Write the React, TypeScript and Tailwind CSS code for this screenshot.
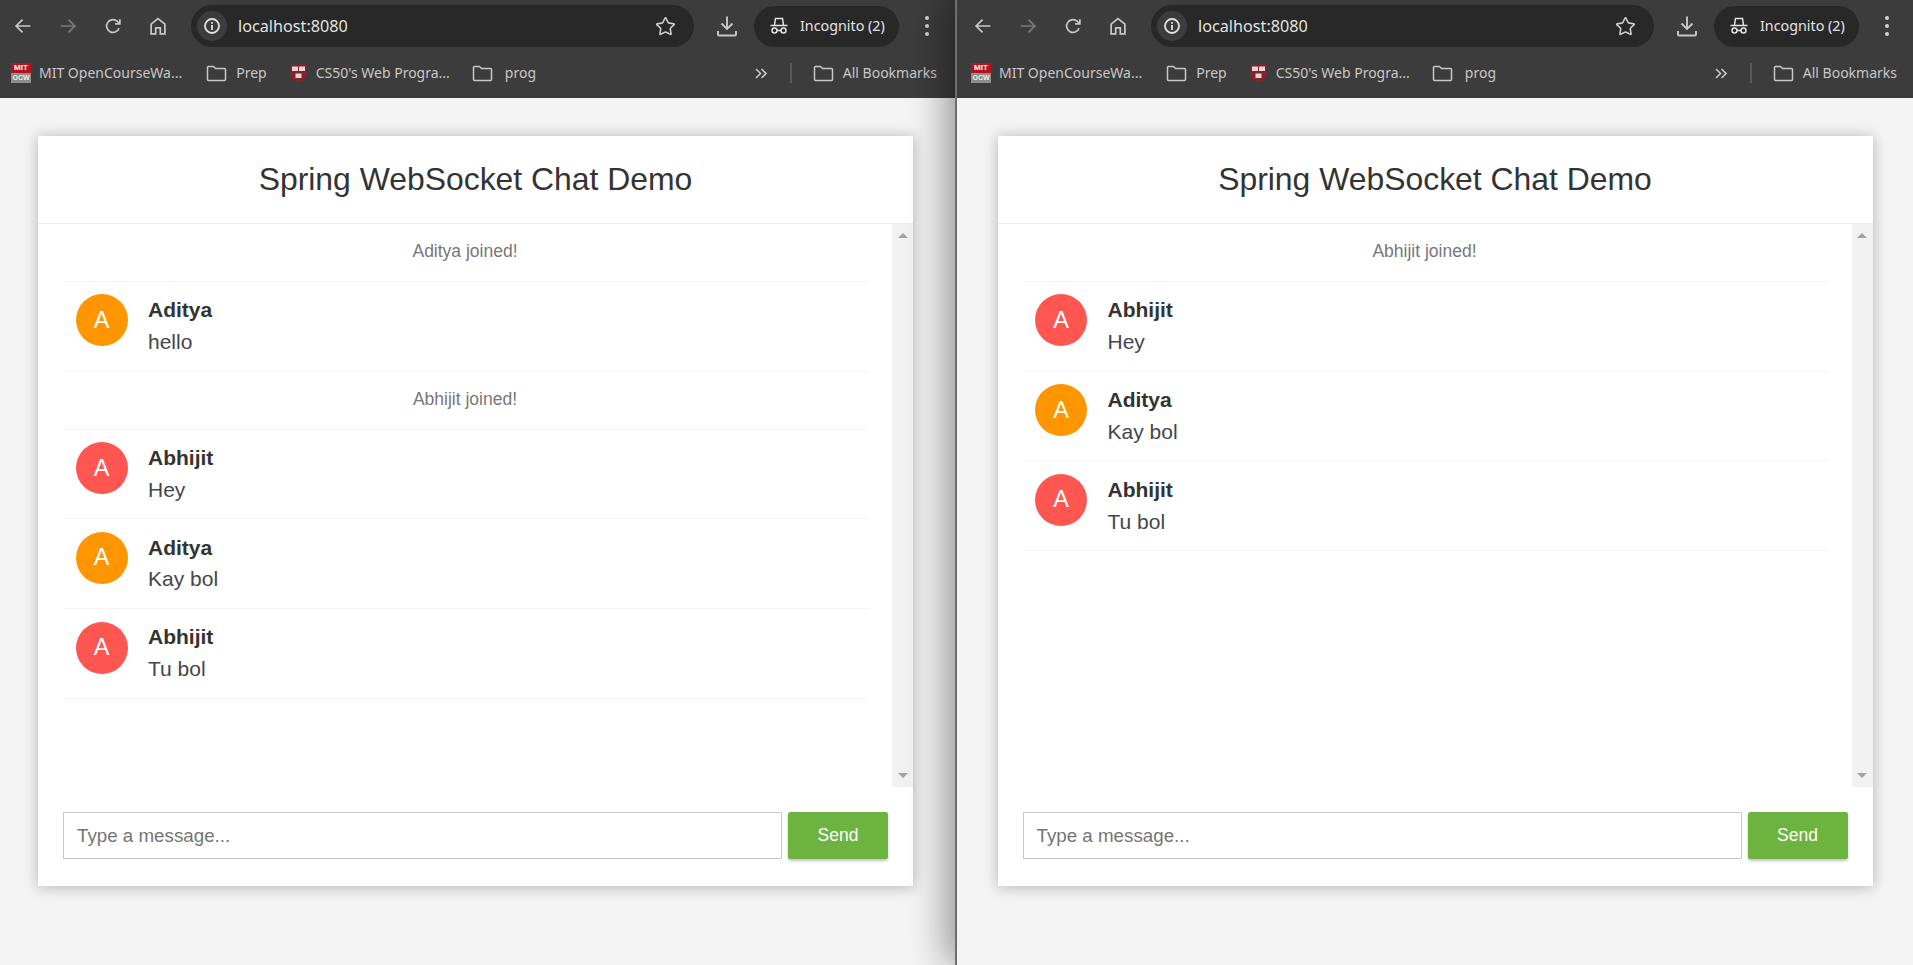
import { Star } from "lucide-react";

type Msg =
  | { kind: "event"; text: string }
  | { kind: "chat"; name: string; text: string };

const leftMessages: Msg[] = [
  { kind: "event", text: "Aditya joined!" },
  { kind: "chat", name: "Aditya", text: "hello" },
  { kind: "event", text: "Abhijit joined!" },
  { kind: "chat", name: "Abhijit", text: "Hey" },
  { kind: "chat", name: "Aditya", text: "Kay bol" },
  { kind: "chat", name: "Abhijit", text: "Tu bol" },
];

const rightMessages: Msg[] = [
  { kind: "event", text: "Abhijit joined!" },
  { kind: "chat", name: "Abhijit", text: "Hey" },
  { kind: "chat", name: "Aditya", text: "Kay bol" },
  { kind: "chat", name: "Abhijit", text: "Tu bol" },
];

function ToolIcon({ children, dim }: { children: React.ReactNode; dim?: boolean }) {
  return (
    <div className="flex h-[52px] w-[45px] items-center justify-center">
      <svg
        width="22"
        height="22"
        viewBox="0 0 24 24"
        fill="none"
        stroke={dim ? "#7a7a7a" : "#c7c7c7"}
        strokeWidth="1.9"
      >
        {children}
      </svg>
    </div>
  );
}

function FolderIcon() {
  return (
    <svg width="21" height="17" viewBox="0 0 21 17" fill="none" stroke="#c7c7c7" strokeWidth="1.5">
      <path d="M1.5 2.5a1 1 0 0 1 1-1h5l2 2h9a1 1 0 0 1 1 1v10a1 1 0 0 1-1 1h-16a1 1 0 0 1-1-1z" />
    </svg>
  );
}

function OcwIcon() {
  return (
    <div className="flex h-[20px] w-[20px] flex-col overflow-hidden text-center font-['Liberation_Sans',sans-serif] text-[8px] font-bold leading-[10px]">
      <div className="h-[10px] bg-[#b3131c] text-white">MIT</div>
      <div className="h-[10px] bg-[#8e8e86] text-[7px] text-[#eeeeee]">OCW</div>
    </div>
  );
}

function ShieldIcon() {
  return (
    <svg width="17" height="20" viewBox="0 0 17 20">
      <path d="M0.5 1.5h16v9c0 4.5-4 7-8 9c-4-2-8-4.5-8-9z" fill="#8f1d2c" />
      <rect x="2" y="3.5" width="6" height="4.5" fill="#d8d8d8" />
      <rect x="9" y="3.5" width="6" height="4.5" fill="#d8d8d8" />
      <rect x="5.5" y="10.5" width="6" height="4.5" fill="#d8d8d8" />
    </svg>
  );
}

function Bookmark({ icon, label, className }: { icon: React.ReactNode; label: string; className?: string }) {
  return (
    <div className={`flex items-center ${className ?? ""}`}>
      {icon}
      <span className="text-[14px] leading-5 whitespace-nowrap text-[#c7c7c7]">{label}</span>
    </div>
  );
}

function BrowserChrome() {
  return (
    <div className="h-[98px] bg-[#3c3c3c] font-['Noto_Sans',sans-serif]">
      <div className="flex h-[52px] items-center">
        <ToolIcon>
          <path d="M20 12H5M11.5 5l-7 7 7 7" />
        </ToolIcon>
        <ToolIcon dim>
          <path d="M4 12h15M12.5 5l7 7-7 7" />
        </ToolIcon>
        <ToolIcon>
          <path d="M18.6 14.5a7 7 0 1 1-1.6-7.4L19.5 9.6M19.5 4.5v5.2h-5.2" />
        </ToolIcon>
        <ToolIcon>
          <path d="M4.5 20.5V10L12 4l7.5 6v10.5h-5v-6.5h-5v6.5z" />
        </ToolIcon>
        <div className="ml-[11px] flex h-[42px] w-[503px] items-center rounded-full bg-[#282828] pl-[6px]">
          <div className="flex h-[30px] w-[30px] items-center justify-center rounded-full bg-[#3c3c3c]">
            <svg width="18" height="18" viewBox="0 0 18 18" fill="none" stroke="#e3e3e3" strokeWidth="1.8">
              <circle cx="9" cy="9" r="7" />
              <path d="M9 8v5M9 5v1.8" />
            </svg>
          </div>
          <span className="ml-[11px] text-[16.2px] text-[#e3e3e3]">localhost:8080</span>
          <Star className="mr-[18px] ml-auto h-[21px] w-[21px] text-[#d0d0d0]" strokeWidth={1.8} />
        </div>
        <div className="ml-[21px] flex h-[26px] w-[24px] items-center justify-center">
          <svg width="22" height="22" viewBox="0 0 22 22" fill="none" stroke="#c7c7c7" strokeWidth="1.9">
            <path d="M11 1.5V14M5.5 8.5L11 14l5.5-5.5M2 16v3.5a1 1 0 0 0 1 1h16a1 1 0 0 0 1-1V16" />
          </svg>
        </div>
        <div className="ml-[15px] flex h-[41px] w-[145px] items-center rounded-full bg-[#282828] pl-[16px]">
          <svg width="18" height="18" viewBox="0 0 18 18" fill="none" stroke="#e3e3e3" strokeWidth="1.5">
            <path d="M4.5 8l1-6.5h7l1 6.5M0.5 8.5h17" />
            <circle cx="4.5" cy="13.5" r="2.5" />
            <circle cx="13.5" cy="13.5" r="2.5" />
            <path d="M7 13.5h4" />
          </svg>
          <span className="ml-[12px] text-[14.3px] whitespace-nowrap text-[#e3e3e3]">Incognito (2)</span>
        </div>
        <div className="ml-[26px] flex flex-col gap-[4px]">
          <div className="h-[4px] w-[4px] rounded-full bg-[#d0d0d0]" />
          <div className="h-[4px] w-[4px] rounded-full bg-[#d0d0d0]" />
          <div className="h-[4px] w-[4px] rounded-full bg-[#d0d0d0]" />
        </div>
      </div>
      <div className="flex h-[46px] w-[955px] items-center pr-[18px] pb-[4px] pl-[11px]">
        <Bookmark icon={<OcwIcon />} label="MIT OpenCourseWa..." className="gap-[8px]" />
        <Bookmark icon={<FolderIcon />} label="Prep" className="ml-[24px] gap-[9px]" />
        <Bookmark icon={<ShieldIcon />} label="CS50's Web Progra..." className="ml-[23px] gap-[9px]" />
        <Bookmark icon={<FolderIcon />} label="prog" className="ml-[22px] gap-[12px]" />
        <svg className="ml-auto" width="12" height="11" viewBox="0 0 12 11" fill="none" stroke="#c7c7c7" strokeWidth="1.6">
          <path d="M1 1l4.5 4.5L1 10M6.5 1L11 5.5 6.5 10" />
        </svg>
        <div className="mr-[21px] ml-[23px] h-[20px] w-[2px] bg-[#5a5a5a]" />
        <Bookmark icon={<FolderIcon />} label="All Bookmarks" className="gap-[9px]" />
      </div>
    </div>
  );
}

function Avatar({ name }: { name: string }) {
  const bg = name === "Aditya" ? "bg-[#ff9600]" : "bg-[#ff5652]";
  return (
    <div className={`absolute top-[12.6px] left-[12.5px] flex h-[52px] w-[52px] items-center justify-center rounded-full text-[23.5px] text-white ${bg}`}>
      {name[0]}
    </div>
  );
}

function MessageRow({ msg }: { msg: Msg }) {
  if (msg.kind === "event") {
    return (
      <li className="border-b border-[#f4f4f4] pt-[12.2px] pb-[12.8px] text-center text-[17.5px] leading-[31.9px] text-[#777777]">
        {msg.text}
      </li>
    );
  }
  return (
    <li className="relative border-b border-[#f4f4f4] pt-[12.2px] pb-[12.8px] pl-[85px]">
      <Avatar name={msg.name} />
      <div className="text-[21px] leading-[31.9px] font-bold text-[#333333]">{msg.name}</div>
      <div className="text-[21px] leading-[31.9px] text-[#43464b]">{msg.text}</div>
    </li>
  );
}

function ChatCard({ messages }: { messages: Msg[] }) {
  return (
    <div className="mx-auto mt-[38px] flex h-[750px] w-[875px] flex-col bg-white font-['Liberation_Sans',Arial,sans-serif] shadow-[0_1px_14px_rgba(0,0,0,0.27)]">
      <div className="flex h-[88px] items-center justify-center border-b border-[#ececec]">
        <h2 className="text-[31.9px] text-[#333333]">Spring WebSocket Chat Demo</h2>
      </div>
      <div className="flex h-[563px]">
        <ul className="min-w-0 flex-1 px-[25px]">
          {messages.map((m, i) => (
            <MessageRow key={i} msg={m} />
          ))}
        </ul>
        <div className="flex w-[21px] flex-col items-center justify-between bg-[#f1f1f1] py-[9px]">
          <div className="h-0 w-0 border-x-[5px] border-b-[5px] border-x-transparent border-b-[#a3a3a3]" />
          <div className="h-0 w-0 border-x-[5px] border-t-[5px] border-x-transparent border-t-[#a3a3a3]" />
        </div>
      </div>
      <div className="flex gap-[6px] px-[25px] pt-[25px]">
        <input
          className="h-[47px] min-w-0 flex-1 border border-[#c8c8c8] px-[13px] text-[18.75px] text-[#333333] outline-none placeholder:text-[#757575]"
          placeholder="Type a message..."
        />
        <button className="h-[47px] w-[100px] rounded-[2.5px] bg-[#6db33f] pb-[1px] text-[17.5px] text-white shadow-[0_2px_3px_rgba(0,0,0,0.24)]">
          Send
        </button>
      </div>
    </div>
  );
}

export default function App() {
  return (
    <div className="flex h-screen w-full overflow-hidden bg-[#f4f4f4]">
      <div className="h-full w-[955px] shrink-0">
        <BrowserChrome />
        <div className="w-[951px]">
          <ChatCard messages={leftMessages} />
        </div>
      </div>
      <div className="relative h-full min-w-0 flex-1 border-l-2 border-[#6e6e6e] bg-[#f4f4f4] shadow-[-8px_0_36px_rgba(0,0,0,0.4)]">
        <div className="bg-[#3c3c3c] pl-[3px]">
          <BrowserChrome />
        </div>
        <ChatCard messages={rightMessages} />
      </div>
    </div>
  );
}
